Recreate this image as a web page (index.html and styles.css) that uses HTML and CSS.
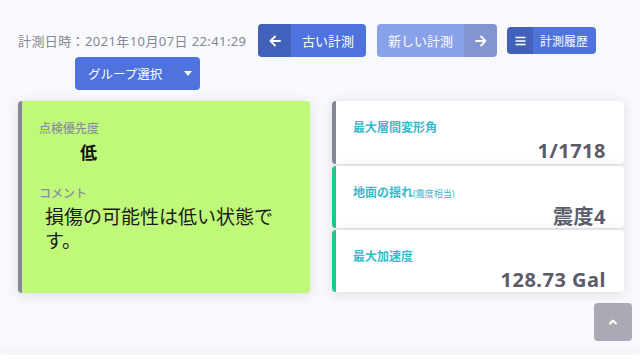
FILE: index.html
```html
<!DOCTYPE html>
<html>
    <head>
        <meta charset="utf-8">
        <title>計測結果</title>
        <link rel="stylesheet" href="styles.css">
    </head>
    <body>
        <div class="toolbar">
            <div class="toolbar-row">
                <span class="measured-at">計測日時：2021年10月07日 22:41:29</span>
                <a class="btn btn-split" href="javascript:void(0);">
                    <span class="btn-icon">
                        <svg width="12" height="12" viewBox="0 0 12 12"><path d="M6 1.5L1.5 6L6 10.5M1.8 6H11" fill="none" stroke="currentColor" stroke-width="1.8" stroke-linecap="round" stroke-linejoin="round"/></svg>
                    </span>
                    <span class="btn-text">古い計測</span>
                </a>
                <a class="btn btn-split disabled" href="javascript:void(0);">
                    <span class="btn-text">新しい計測</span>
                    <span class="btn-icon">
                        <svg width="12" height="12" viewBox="0 0 12 12"><path d="M6 1.5L10.5 6L6 10.5M10.2 6H1" fill="none" stroke="currentColor" stroke-width="1.8" stroke-linecap="round" stroke-linejoin="round"/></svg>
                    </span>
                </a>
                <a class="btn btn-split btn-sm" href="javascript:void(0);">
                    <span class="btn-icon">
                        <svg width="11" height="10" viewBox="0 0 11 10"><path d="M0.5 1.5H10.5M0.5 5H10.5M0.5 8.5H10.5" fill="none" stroke="currentColor" stroke-width="1.4"/></svg>
                    </span>
                    <span class="btn-text">計測履歴</span>
                </a>
            </div>
            <div class="toolbar-row second">
                <a class="btn btn-dropdown" href="javascript:void(0);">グループ選択<span class="caret"></span></a>
            </div>
        </div>

        <div class="cards">
            <!-- 点検優先度・コメント -->
            <div class="card card-main">
                <div class="label">点検優先度</div>
                <div class="priority">低</div>
                <div class="label comment-label">コメント</div>
                <div class="comment">損傷の可能性は低い状態です。</div>
            </div>
            <!-- 計測値 -->
            <div class="stats">
                <div class="card stat border-gray">
                    <div class="stat-title">最大層間変形角</div>
                    <div class="stat-value">1/1718</div>
                </div>
                <div class="card stat border-green">
                    <div class="stat-title">地面の揺れ<small>(震度相当)</small></div>
                    <div class="stat-value">震度4</div>
                </div>
                <div class="card stat border-green">
                    <div class="stat-title">最大加速度</div>
                    <div class="stat-value">128.73 Gal</div>
                </div>
            </div>
        </div>

        <a class="scroll-top" href="javascript:void(0);">
            <svg width="10" height="8" viewBox="0 0 10 8"><path d="M2 5.5L5 2.5L8 5.5" fill="none" stroke="#fff" stroke-width="2" stroke-linecap="round" stroke-linejoin="round"/></svg>
        </a>
        <div class="footer"></div>
    </body>
</html>
```
FILE: styles.css
```css
*{
    margin: 0;
    padding: 0;
    box-sizing: border-box;
}
body{
    width: 640px;
    height: 360px;
    overflow: hidden;
    position: relative;
    background-color: #f8f9fc;
    font-family: "Noto Sans", "Noto Sans CJK JP", sans-serif;
    color: #858796;
}
a{
    text-decoration: none;
}
.toolbar{
    padding: 24px 0 0 18px;
}
.toolbar-row{
    display: flex;
    align-items: center;
    height: 33px;
}
.toolbar-row.second{
    padding-left: 57px;
}
.measured-at{
    font-size: 13px;
    color: #858796;
    width: 240px;
    white-space: nowrap;
    letter-spacing: 0.4px;
}
.btn{
    display: flex;
    align-items: stretch;
    height: 33px;
    background-color: #4e73df;
    color: #fff;
    border-radius: 4px;
    font-size: 13px;
    overflow: hidden;
    margin-right: 11px;
}
.btn-icon{
    display: flex;
    align-items: center;
    justify-content: center;
    width: 33px;
    background-color: rgba(0, 0, 0, 0.15);
}
.btn-text{
    display: flex;
    align-items: center;
    padding: 0 12px 0 11px;
}
.btn.disabled{
    opacity: 0.65;
}
.btn.disabled .btn-text{
    padding: 0 11px 0 11px;
}
.btn-sm{
    height: 27px;
    font-size: 12px;
    margin-left: -1px;
}
.btn-sm .btn-icon{
    width: 26px;
}
.btn-sm .btn-text{
    padding: 0 8px 0 7px;
}
.btn-dropdown{
    align-items: center;
    width: 125px;
    padding-left: 13px;
    font-size: 12.5px;
}
.caret{
    margin-left: 22px;
    border-left: 4px solid transparent;
    border-right: 4px solid transparent;
    border-top: 5px solid #fff;
}
.cards{
    display: grid;
    grid-template-columns: 292px 292px;
    column-gap: 22px;
    padding-left: 18px;
    margin-top: 11px;
}
.card{
    background-color: #fff;
    border-radius: 4px;
    box-shadow: 0 2px 12px rgba(58, 59, 69, 0.15);
}
.card-main{
    height: 192px;
    background-color: #c0f87a;
    border-left: 4px solid #858796;
    padding: 20px 20px 0 17px;
}
.label{
    font-size: 12px;
    line-height: 16px;
    color: #8b8f9c;
    font-weight: 500;
}
.priority{
    font-size: 17px;
    font-weight: bold;
    color: #111;
    line-height: 24px;
    padding-left: 41px;
    margin-top: 4px;
}
.comment-label{
    margin-top: 21px;
}
.comment{
    font-size: 19px;
    line-height: 24px;
    color: #1a1a1a;
    padding-left: 6px;
    margin-top: 3px;
}
.stats{
    display: flex;
    flex-direction: column;
    gap: 2px;
}
.stat{
    height: 63px;
    padding: 19px 18px 0 17px;
    border-left: 4px solid #858796;
}
.stat.border-green{
    border-left-color: #1cc88a;
    height: 62px;
}
.stat-title{
    font-size: 12px;
    line-height: 16px;
    font-weight: bold;
    color: #36b9cc;
}
.stat-title small{
    font-size: 9px;
    font-weight: normal;
}
.stat-value{
    text-align: right;
    font-size: 20px;
    line-height: 24px;
    font-weight: bold;
    color: #5a5c69;
    margin-top: 3px;
    letter-spacing: 0.5px;
}
.scroll-top{
    position: absolute;
    left: 594px;
    top: 303px;
    width: 38px;
    height: 38px;
    border-radius: 4px;
    background-color: rgba(90, 92, 105, 0.5);
    display: flex;
    align-items: center;
    justify-content: center;
}
.footer{
    position: absolute;
    left: 0;
    right: 0;
    top: 355px;
    height: 5px;
    background-color: #fff;
    box-shadow: 0 -2px 8px rgba(58, 59, 69, 0.05);
}
```
